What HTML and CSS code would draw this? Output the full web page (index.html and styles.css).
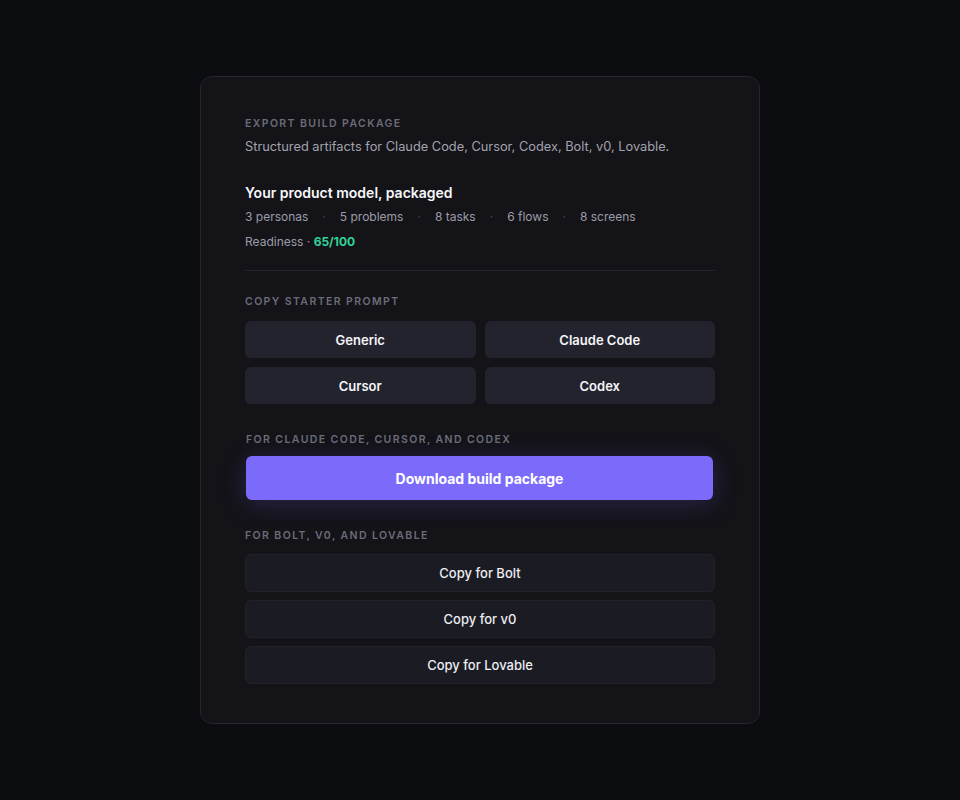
FILE: index.html
```html
<!DOCTYPE html>
<html lang="en">
<head>
    <meta charset="UTF-8">
    <meta name="viewport" content="width=device-width, initial-scale=1.0">
    <title>Export Build Package</title>
    <link rel="stylesheet" href="styles.css">
</head>
<body>
    <div class="export-card">
        <div class="section-label">Export build package</div>
        <p class="subtitle">Structured artifacts for Claude Code, Cursor, Codex, Bolt, v0, Lovable.</p>

        <h2 class="model-title">Your product model, packaged</h2>
        <div class="stats">
            <span>3 personas</span><span class="dot">·</span>
            <span>5 problems</span><span class="dot">·</span>
            <span>8 tasks</span><span class="dot">·</span>
            <span>6 flows</span><span class="dot">·</span>
            <span>8 screens</span>
        </div>
        <div class="readiness">Readiness · <strong>65/100</strong></div>

        <hr class="divider">

        <!-- Starter prompts -->
        <div class="section-label">Copy starter prompt</div>
        <div class="prompt-grid">
            <button class="prompt-button">Generic</button>
            <button class="prompt-button">Claude Code</button>
            <button class="prompt-button">Cursor</button>
            <button class="prompt-button">Codex</button>
        </div>

        <!-- Package download -->
        <div class="download-block">
            <div class="section-label">For Claude Code, Cursor, and Codex</div>
            <button class="download-button">Download build package</button>
        </div>

        <!-- Copy for web builders -->
        <div class="section-label section-gap">For Bolt, v0, and Lovable</div>
        <div class="copy-list">
            <button class="copy-button">Copy for Bolt</button>
            <button class="copy-button">Copy for v0</button>
            <button class="copy-button">Copy for Lovable</button>
        </div>
    </div>
</body>
</html>
```

FILE: styles.css
```css
body {
    display: flex;
    justify-content: center;
    align-items: center;
    height: 100vh;
    margin: 0;
    background-color: #0c0d11;
    font-family: Inter, "Noto Sans", sans-serif;
    color: #f2f2f5;
}
.export-card {
    width: 470px;
    padding: 39px 44px 39px;
    background-color: #131318;
    border: 1px solid #25252c;
    border-radius: 12px;
}
.section-label {
    font-size: 10.5px;
    line-height: 16px;
    font-weight: 600;
    letter-spacing: 1.4px;
    text-transform: uppercase;
    color: #6c6c78;
}
.subtitle {
    margin: 5px 0 0;
    font-size: 12.8px;
    line-height: 20px;
    color: #a3a3ae;
}
.model-title {
    margin: 26px 0 0;
    font-size: 14px;
    line-height: 20px;
    font-weight: 600;
    color: #f7f7fa;
}
.stats {
    display: flex;
    gap: 14px;
    margin-top: 5px;
    font-size: 12px;
    line-height: 18px;
    color: #9c9ca7;
}
.stats .dot {
    color: #484852;
}
.readiness {
    margin-top: 7px;
    font-size: 12px;
    line-height: 18px;
    color: #9c9ca7;
}
.readiness strong {
    color: #34d399;
    font-weight: 700;
}
.divider {
    margin: 19px 0 23px;
    border: none;
    border-top: 1px solid #24242b;
}
.prompt-grid {
    display: grid;
    grid-template-columns: 1fr 1fr;
    gap: 9px;
    margin-top: 11px;
}
.prompt-button,
.copy-button,
.download-button {
    font-family: inherit;
    border: none;
    cursor: pointer;
}
.prompt-button {
    height: 37px;
    background-color: #23232e;
    color: #f5f5f8;
    border-radius: 6px;
    font-size: 13px;
    font-weight: 600;
}
.prompt-button:hover {
    background-color: #2b2b38;
}
.download-block {
    margin-top: 28px;
    padding: 0 1px;
}
.download-button {
    display: block;
    width: calc(100% - 1px);
    height: 44px;
    margin-top: 8px;
    background-color: #7c6bfb;
    color: #ffffff;
    border-radius: 6px;
    font-size: 14px;
    font-weight: 700;
    box-shadow: 0 4px 24px rgba(124, 107, 251, 0.22);
}
.download-button:hover {
    background-color: #6e5cf5;
}
.section-gap {
    margin-top: 28px;
}
.copy-list {
    display: flex;
    flex-direction: column;
    gap: 8px;
    margin-top: 10px;
}
.copy-button {
    height: 38px;
    background-color: #1b1b23;
    border: 1px solid #22222b;
    color: #ececf1;
    border-radius: 6px;
    font-size: 13px;
    font-weight: 500;
}
.copy-button:hover {
    background-color: #22222c;
}
```
